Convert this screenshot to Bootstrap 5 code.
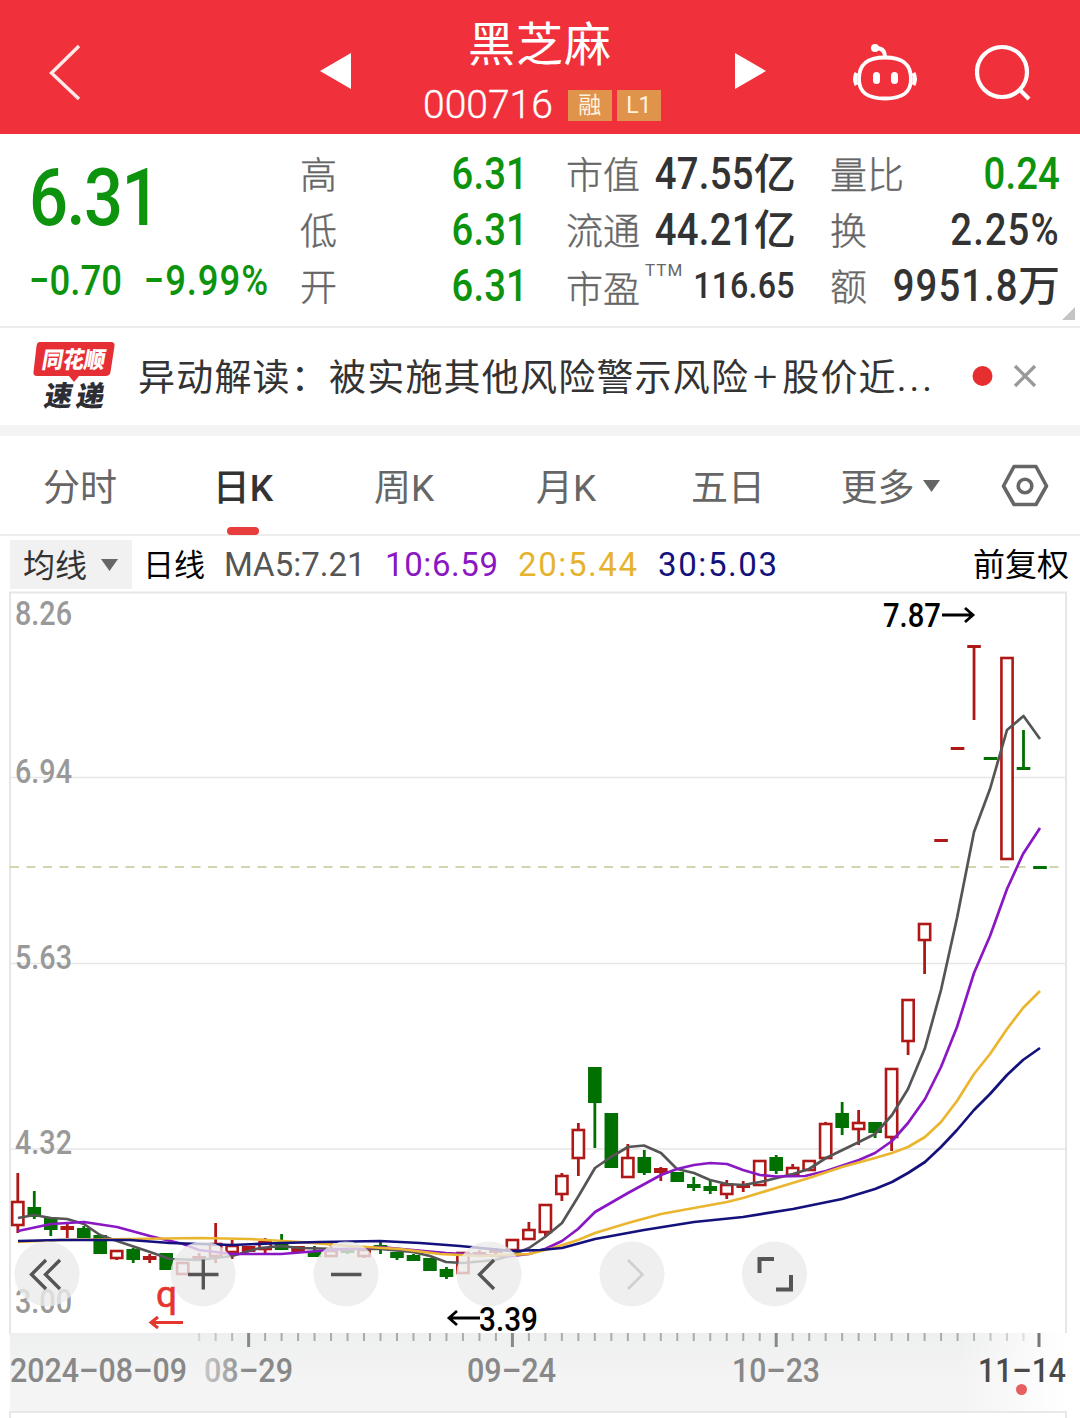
<!DOCTYPE html>
<html lang="zh-CN">
<head>
<meta charset="utf-8">
<meta name="viewport" content="width=device-width, initial-scale=1">
<title>黑芝麻 000716</title>
<link href="https://cdn.jsdelivr.net/npm/bootstrap@5.3.0/dist/css/bootstrap.min.css" rel="stylesheet">
<style>
  body { width: 1080px; height: 1418px; overflow: hidden; background: #fff; color: #333; font-family: Roboto, "Noto Sans CJK SC", sans-serif; line-height: 1; }
  svg { display: block; flex: none; }
  .topbar { height: 134px; background: #f0303a; color: #fff; padding: 0 40px 0 49px; }
  .topbar > svg:first-child { margin-right: 239px; }
  .stock-title { width: 244px; margin: 0 68px 0 71px; flex: none; }
  .stock-name { font-size: 47px; line-height: 56px; letter-spacing: 1px; margin-top: 17px; padding-left: 45px; }
  .stock-code { font-size: 39px; font-weight: 300; line-height: 32px; margin-right: 15px; -webkit-text-stroke: .4px #fff; }
  .tagbox { width: 44px; height: 31px; line-height: 31px; background: #e0934a; font-size: 23px; text-align: center; margin-right: 5px; color: #fff3e0; }
  .quote { height: 192px; padding: 0 20px 0 29px; }
  .up-g { color: #0d930d; }
  .din { display: inline-block; transform: scaleX(.87); transform-origin: right center; }
  .din-l { transform-origin: left center; }
  .last-price { font-size: 79px; line-height: 80px; font-weight: 500; margin-top: 24px; letter-spacing: -1.8px; }
  .delta { font-size: 42px; font-weight: 500; line-height: 50px; margin-top: 18px; white-space: nowrap; }
  .pct { letter-spacing: 1px; margin-left: 25px; }
  .q-left { width: 271px; }
  .q-col { padding-top: 12px; }
  .q-row { height: 56px; font-size: 37px; color: #666; white-space: nowrap; }
  .q-row > span:first-child { padding-top: 5px; font-weight: 300; -webkit-text-stroke: .4px #666; }
  .q-val { font-size: 44px; font-weight: 500; color: #333; padding-bottom: 1px; letter-spacing: .2px; }
  .q-val.up-g { color: #0d930d; }
  .q-val .din { letter-spacing: .3px; }
  .unit { font-size: 42px; letter-spacing: 0; }
  .ttm { font-size: 17px; letter-spacing: 1px; margin: -32px auto 0 5px; }
  .news { height: 99px; border-top: 2px solid #ececec; padding: 0 43px 0 32px; }
  .news-text { font-size: 37px; letter-spacing: 1.2px; margin-left: 22px; width: 834px; white-space: nowrap; line-height: 54px; padding-top: 5px; }
  .plus { display: inline-block; width: 33px; text-align: center; font-weight: 300; font-size: 43px; line-height: 37px; }
  .dots { letter-spacing: 3px; }
  .band { height: 11px; background: #f4f4f4; }
  .ktabs { height: 100px; border-bottom: 2px solid #ededed; font-size: 37px; color: #666; }
  .ktab { width: 162px; height: 100px; padding: 5px 2px 0 0; }
  .ktab.active { color: #333; font-weight: 500; position: relative; padding-right: 0; }
  .ktab.active::after { content: ""; position: absolute; left: 65px; bottom: 1px; width: 32px; height: 8px; border-radius: 4px; background: #e83d3d; }
  .ma-row { height: 55px; padding: 2px 11px 0 10px; font-size: 33px; white-space: nowrap; }
  .ma-pick { width: 122px; height: 49px; background: #f1f1f1; font-size: 32px; padding: 2px 0 0 13px; }
  .ma-num { padding-top: 0; }
  .cjk32 { font-size: 32px; color: #000; padding-top: 1px; }
  .axis { font-weight: 500; font-size: 34px; }
</style>
</head>
<body>
<header class="topbar d-flex align-items-start">
  <svg width="32" height="134" fill="none" stroke="#ffe9e9" stroke-width="3.4"><path d="M30 46 2.500 73 30 99"/></svg>
  <svg width="32" height="134"><path d="M31 53v36L0 71z" fill="#fff"/></svg>
  <div class="stock-title">
    <div class="stock-name">黑芝麻</div>
    <div class="d-flex align-items-center pt-3"><span class="stock-code">000716</span><span class="tagbox">融</span><span class="tagbox me-0">L1</span></div>
  </div>
  <svg width="32" height="134"><path d="M0 53v36l31-18z" fill="#fff"/></svg>
  <svg width="66" height="134" style="margin-left:85px" fill="none" stroke="#fff" stroke-width="3.800">
    <path d="M33 57.500C52 57.500 59 65 59 79S50 98.500 33 98.500 7 93 7 79 14 57.500 33 57.500z"/>
    <path d="M33 57Q33 48 24 48"/><circle cx="23" cy="48" r="4" fill="#fff" stroke="none"/>
    <path d="M4.500 73Q1.500 79 4.500 85M61.500 73q3 6 0 12" stroke-width="4"/>
    <path d="M24.500 75.500v5M42.500 75.500v5" stroke-width="7" stroke-linecap="round"/>
  </svg>
  <svg width="58" height="134" style="margin-left:57px" fill="none" stroke="#fff" stroke-width="4.200"><circle cx="27" cy="72" r="25"/><path d="m44 89 10 10"/></svg>
</header>

<section class="quote d-flex position-relative">
  <div class="q-left up-g">
    <div class="last-price"><span class="din din-l">6.31</span></div>
    <div class="delta"><span class="din din-l">−0.70<span class="pct">−9.99%</span></span></div>
  </div>
  <div class="q-col" style="width:228px">
    <div class="q-row d-flex align-items-center justify-content-between"><span>高</span><span class="q-val up-g din">6.31</span></div>
    <div class="q-row d-flex align-items-center justify-content-between"><span>低</span><span class="q-val up-g din">6.31</span></div>
    <div class="q-row d-flex align-items-center justify-content-between"><span>开</span><span class="q-val up-g din">6.31</span></div>
  </div>
  <div class="q-col" style="width:229px;margin-left:38px">
    <div class="q-row d-flex align-items-center justify-content-between"><span>市值</span><span class="q-val"><span class="din">47.55</span><span class="unit">亿</span></span></div>
    <div class="q-row d-flex align-items-center justify-content-between"><span>流通</span><span class="q-val"><span class="din">44.21</span><span class="unit">亿</span></span></div>
    <div class="q-row d-flex align-items-center"><span class="pt-2">市盈</span><span class="ttm">TTM</span><span class="q-val din" style="font-size:37px;margin-left:-30px">116.65</span></div>
  </div>
  <div class="q-col" style="width:230px;margin-left:35px">
    <div class="q-row d-flex align-items-center justify-content-between"><span>量比</span><span class="q-val up-g din">0.24</span></div>
    <div class="q-row d-flex align-items-center justify-content-between"><span>换</span><span class="q-val din" style="letter-spacing:1.200px">2.25%</span></div>
    <div class="q-row d-flex align-items-center justify-content-between"><span>额</span><span class="q-val"><span class="din" style="letter-spacing:1.200px">9951.8</span><span class="unit">万</span></span></div>
  </div>
  <svg class="position-absolute" style="right:5px;bottom:6px" width="13" height="13"><path d="M13 0v13H0z" fill="#c4c4c4"/></svg>
</section>

<section class="news d-flex align-items-center">
  <svg width="84" height="76" viewBox="32 340 84 76">
    <path d="M40 343h71q4 0 3.500 4l-4 26q-.5 4-5 4H79l-5 6-5-6H37q-4 0-3.500-4l3-26q.5-4 3.500-4z" fill="#e62f35"/>
    <text transform="translate(41 369) skewX(-10)" font-size="23" font-weight="900" textLength="63" lengthAdjust="spacingAndGlyphs" fill="#fff">同花顺</text>
    <text transform="translate(43 407) skewX(-10)" font-size="28" font-weight="900" textLength="60" fill="#2d2d35">速递</text>
  </svg>
  <div class="news-text">异动解读：被实施其他风险警示风险<span class="plus">+</span>股价近<span class="dots">...</span></div>
  <svg width="21" height="24" style="margin-left:1px"><circle cx="10.500" cy="11" r="10" fill="#e62e2e"/></svg>
  <svg width="24" height="26" style="margin-left:20px" stroke="#999" stroke-width="3.200"><path d="m2 2 20 20M22 2 2 22"/></svg>
</section>
<div class="band"></div>

<nav class="ktabs d-flex">
  <div class="ktab d-flex align-items-center justify-content-center">分时</div>
  <div class="ktab active d-flex align-items-center justify-content-center">日K</div>
  <div class="ktab d-flex align-items-center justify-content-center">周K</div>
  <div class="ktab d-flex align-items-center justify-content-center">月K</div>
  <div class="ktab d-flex align-items-center justify-content-center">五日</div>
  <div class="ktab d-flex align-items-center justify-content-center">更多<svg width="17" height="18" style="margin-left:8px"><path d="M0 0h17L8.500 12z" fill="#666"/></svg></div>
  <svg width="108" height="99" viewBox="972 436 108 99" fill="none" stroke="#666" stroke-width="3.600"><path d="M1014 466.500h22l10.500 19.500-10.500 18.500h-22L1003.500 486z" stroke-linejoin="round"/><circle cx="1025" cy="486" r="6.800"/></svg>
</nav>

<div class="ma-row d-flex align-items-center">
  <div class="ma-pick d-flex align-items-center">均线<svg width="17" height="14" style="margin-left:14px"><path d="M0 0h17L8.500 12z" fill="#666"/></svg></div>
  <span class="cjk32" style="margin-left:11px;font-size:31px">日线</span>
  <span class="ma-num" style="width:161px;margin-left:19px;color:#555">MA5:7.21</span>
  <span class="ma-num" style="width:133px;color:#8a17c4;letter-spacing:.600px">10:6.59</span>
  <span class="ma-num" style="width:140px;color:#e6b32e;letter-spacing:1.600px">20:5.44</span>
  <span class="ma-num" style="color:#14107c;letter-spacing:1.600px">30:5.03</span>
  <span class="cjk32 ms-auto">前复权</span>
</div>

<svg id="kchart" width="1080" height="827" viewBox="0 591 1080 827" font-family="Roboto, 'Noto Sans CJK SC', sans-serif">
  <defs>
    <linearGradient id="fadeR"><stop offset="0" stop-color="#fff" stop-opacity="0"/><stop offset="1" stop-color="#fff"/></linearGradient>
    <linearGradient id="fadeText"><stop offset="0" stop-color="#c8c8c8"/><stop offset=".5" stop-color="#888"/></linearGradient>
    <linearGradient id="shade" x2="0" y2="1"><stop offset="0" stop-color="#eeefef"/><stop offset=".6" stop-color="#f4f4f4"/></linearGradient>
  </defs>
  <g stroke="#e6e6e6" stroke-width="2" fill="none">
    <path d="M10 1334V592.500H1066V1334"/>
    <path d="M10 777.500H1066M10 963.500H1066M10 1149H1066" stroke-width="1.500"/>
  </g>
  <path d="M10 867H1066" stroke="#c0ca98" stroke-width="1.600" stroke-dasharray="9 7.500"/>
  <rect x="10" y="1333" width="1056" height="78" fill="url(#shade)"/>
  <path d="M10 1418V1412H1066V1418" fill="none" stroke="#e8e8e8" stroke-width="2"/>
  <g id="ticks"></g>
  <rect x="960" y="1333" width="107" height="78" fill="url(#fadeR)"/>
  <path d="M1039 1333v14" stroke="#777" stroke-width="3"/>
  <g class="axis" fill="#999" font-size="33">
    <text x="15" y="625" textLength="57" lengthAdjust="spacingAndGlyphs">8.26</text>
    <text x="15" y="783" textLength="57" lengthAdjust="spacingAndGlyphs">6.94</text>
    <text x="15" y="969" textLength="57" lengthAdjust="spacingAndGlyphs">5.63</text>
    <text x="15" y="1154" textLength="57" lengthAdjust="spacingAndGlyphs">4.32</text>
    <text x="15" y="1313" textLength="57" lengthAdjust="spacingAndGlyphs">3.00</text>
  </g>
  <g id="candles"></g>
  <g id="averages" fill="none" stroke-width="2.700" stroke-linejoin="round"></g>
  <g fill="#ebebeb" fill-opacity=".8">
    <circle cx="47" cy="1274" r="32.500"/><circle cx="203" cy="1274" r="32.500"/><circle cx="346" cy="1274" r="32.500"/>
    <circle cx="489" cy="1274" r="32.500"/><circle cx="632" cy="1274" r="32.500"/><circle cx="774.500" cy="1274" r="32.500"/>
  </g>
  <g fill="none" stroke="#555" stroke-width="3.400">
    <path d="M46 1260 31.500 1274.500 46 1289M60 1260 45.500 1274.500 60 1289M188 1274.500h30.500M203.300 1259.500v30M331 1274.500h30.500M494 1260 479.500 1274.500 494 1289"/>
    <path d="M759.500 1273v-14H774M776 1289.500h15V1275" stroke-width="4"/>
    <path d="M628 1260 642.500 1274.500 628 1289" stroke="#cfcfcf" stroke-width="2.600"/>
  </g>
  <text x="156" y="1307" font-size="37" fill="#e5352f" stroke="#e5352f" stroke-width=".6">q</text>
  <g fill="none" stroke-width="3">
    <path d="M183 1322.500H151M158 1317l-7 5.500 7 5.500" stroke="#e5352f"/>
    <path d="M942 615H972M965 608l8 7-8 7M480 1318H450M457 1311l-8 7 8 7" stroke="#000" stroke-width="2.800"/>
  </g>
  <g class="axis" fill="#000">
    <text x="883" y="627" textLength="58" lengthAdjust="spacingAndGlyphs">7.87</text>
    <text x="479" y="1331" textLength="59" lengthAdjust="spacingAndGlyphs">3.39</text>
  </g>
  <g class="axis" fill="#888">
    <text x="10" y="1382" textLength="177" lengthAdjust="spacingAndGlyphs">2024–08–09</text>
    <text x="204" y="1382" textLength="89" lengthAdjust="spacingAndGlyphs" fill="url(#fadeText)">08–29</text>
    <text x="467" y="1382" textLength="89" lengthAdjust="spacingAndGlyphs">09–24</text>
    <text x="732" y="1382" textLength="88" lengthAdjust="spacingAndGlyphs">10–23</text>
    <text x="978" y="1382" textLength="88" lengthAdjust="spacingAndGlyphs" fill="#4a4a4a">11–14</text>
  </g>
  <circle cx="1021.500" cy="1389.500" r="5.500" fill="#e65f5f"/>
</svg>

<script src="https://cdn.jsdelivr.net/npm/bootstrap@5.3.0/dist/js/bootstrap.bundle.min.js"></script>
<script>
  // Each candle: kind (h hollow red, r solid red, g green), body top, body bottom, wick top, wick bottom
  const candles = [
    ['h',1202,1225,1173,1233],['g',1207,1217,1191,1219],['g',1218,1230,1217,1236],['r',1226,1230,1224,1238],['g',1228,1238,1226,1238],
    ['g',1235,1254,1235,1254],['h',1251,1258,1251,1260],['g',1249,1260,1248,1263],['r',1256,1260,1254,1263],['g',1253,1270,1253,1270],
    ['h',1263,1274,1263,1274],['r',1256,1260,1253,1260],['h',1244,1256,1223,1263],['h',1246,1252,1240,1259],['r',1246,1252,1246,1252],
    ['h',1242,1249,1238,1253],['g',1242,1250,1234,1250],['r',1246,1252,1246,1252],['g',1252,1257,1246,1257],['h',1251,1256,1241,1256],
    ['g',1250,1253,1250,1254],['h',1250,1256,1250,1258],['g',1245,1249,1242,1254],['g',1252,1258,1252,1260],['g',1255,1261,1254,1261],
    ['g',1258,1271,1258,1271],['g',1269,1277,1267,1279],['h',1253,1273,1252,1273],['r',1252,1255,1250,1255],['r',1250,1253,1248,1256],
    ['h',1240,1250,1240,1250],['h',1230,1239,1222,1239],['h',1205,1232,1205,1236],['h',1176,1194,1173,1201],['h',1130,1158,1123,1176],
    ['g',1067,1103,1067,1148],['g',1113,1168,1113,1168],['h',1158,1177,1144,1177],['g',1157,1173,1150,1175],['r',1168,1173,1167,1181],
    ['g',1172,1182,1172,1182],['g',1184,1188,1177,1191],['g',1186,1191,1181,1194],['h',1185,1194,1180,1199],['r',1185,1188,1181,1192],
    ['h',1161,1185,1161,1185],['g',1157,1171,1155,1174],['h',1168,1175,1164,1175],['h',1161,1170,1161,1170],['h',1124,1158,1122,1158],
    ['g',1113,1128,1102,1135],['h',1123,1129,1110,1145],['g',1122,1133,1122,1138],['h',1069,1137,1069,1151],['h',1000,1041,1000,1055],
    ['h',924,940,924,974],['r',839,842,839,842],['r',747,750,747,750],['r',645,648,645,720],['g',757,760,757,760],
    ['h',658,859,658,859],['g',767,770,730,770],['g',866,869,866,869]
  ];
  const step = 16.487, x0 = 17.8;
  let out = '';
  candles.forEach(([k, top, bottom, hi, lo], i) => {
    const x = x0 + step * i, c = k === 'g' ? '#007000' : '#b01818';
    out += `<path d="M${x} ${hi}V${top}M${x} ${bottom}V${lo}" stroke="${c}" stroke-width="2.800"/>`;
    out += k === 'h'
      ? `<rect x="${x - 5.6}" y="${top}" width="11.200" height="${bottom - top}" fill="#fff" stroke="${c}" stroke-width="2.600"/>`
      : `<rect x="${x - 6.8}" y="${top}" width="13.600" height="${bottom - top}" fill="${c}"/>`;
  });
  document.getElementById('candles').innerHTML = out;

  const lines = {
    '#555': '18,1218 34,1215 51,1218 67,1219 84,1224 100,1235 120,1242 150,1252 170,1259 199,1260 232,1256 260,1248 281,1246 300,1248 340,1249 380,1249 413,1252 430,1256 446,1262 463,1263 495,1260 512,1255 529,1248 545,1237 562,1223 578,1197 595,1168 611,1157 628,1147 644,1145.500 661,1153 677,1169 694,1173 710,1180 727,1184 743,1185 760,1182 793,1174 809,1169 826,1158 859,1142 875,1134 892,1115 908,1089 925,1048 941,990 957,918 974,832 990,789 1007,730 1023.500,716 1040,739',
    '#8a17c4': '18,1231 51,1224 84,1222 117,1227 150,1236 183,1244 199,1250 232,1254 281,1254 331,1250 380,1247 413,1250 446,1253 480,1255 512,1256 529,1254 545,1249 562,1241 578,1229 595,1212 628,1193 661,1175 677,1169 694,1165 710,1163 727,1164 743,1170 760,1175 776,1176.500 805,1176 826,1171 859,1160 875,1153 892,1141 908,1123 925,1099 941,1067 957,1027 974,973 990,936 1007,889 1023,854 1040,828',
    '#ebb62f': '18,1242 60,1240 200,1238 250,1239 300,1242 350,1246 400,1249 440,1254 480,1256 529,1254 553,1248 578,1240 595,1233 628,1223 661,1214 694,1208 727,1202 743,1198 776,1188 809,1178 842,1167 875,1158 892,1153 908,1147 925,1137 941,1122 957,1101 974,1074 990,1054 1007,1029 1023,1008 1040,991',
    '#14107c': '18,1241 60,1240 130,1240 170,1243 232,1245 281,1243 320,1242 380,1241 420,1243 460,1246 512,1251 540,1250 562,1248 595,1239 644,1230 694,1222 743,1217 793,1209 842,1199 875,1189 892,1182 908,1173 925,1162 941,1147 957,1130 974,1110 990,1094 1007,1075 1023,1060 1040,1048'
  };
  document.getElementById('averages').innerHTML =
    Object.entries(lines).map(([c, p]) => `<polyline points="${p}" stroke="${c}"/>`).join('');

  // Day ticks along the time axis, taller where a date is printed
  let ticks = '';
  for (let i = 11; i < 62; i++) {
    const x = x0 + step * i, major = i === 14 || i === 30 || i === 46;
    ticks += `<path d="M${x} 1333v${major ? 14 : 8}" stroke="${major ? '#888' : '#aaa'}" stroke-width="${major ? 3 : 2}" opacity="${i < 14 && !major ? .2 * (i - 9) : 1}"/>`;
  }
  document.getElementById('ticks').innerHTML = ticks;
</script>
</body>
</html>
